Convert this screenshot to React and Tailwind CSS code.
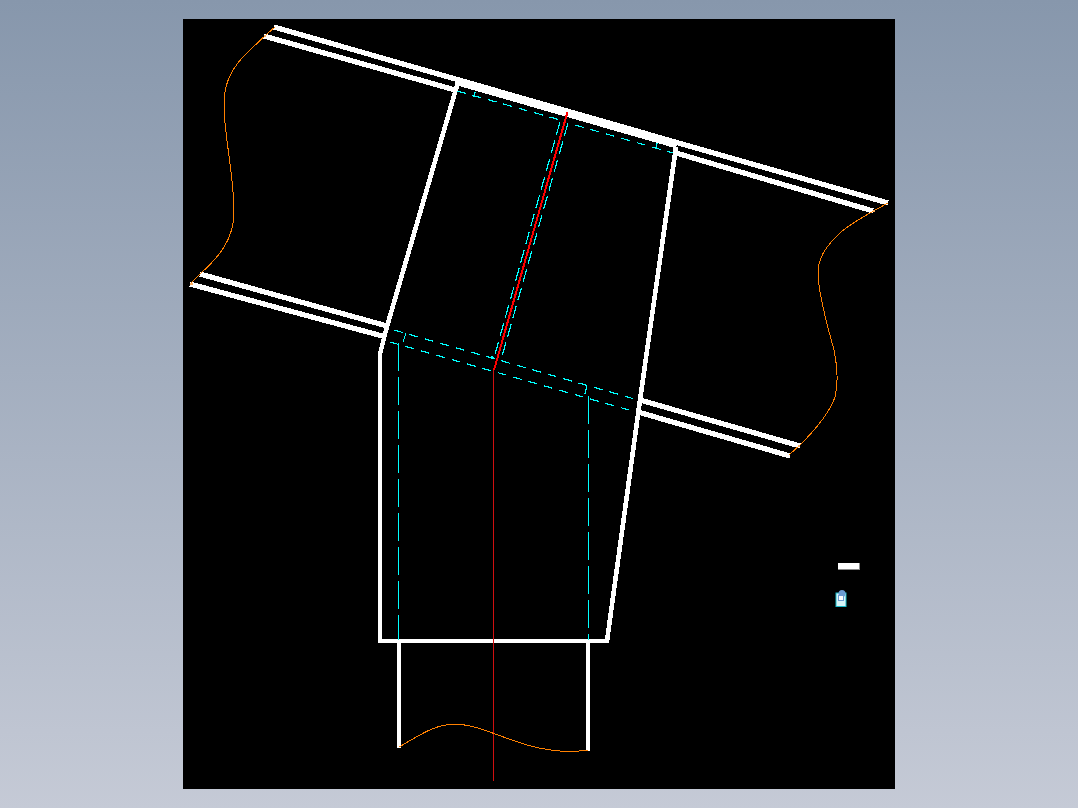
export default function App() {
  const white = "#ffffff";
  const cyan = "#00ffff";
  const orange = "#ff8000";
  return (
    <div className="flex h-[808px] w-full justify-center overflow-hidden bg-gradient-to-b from-[#8797ac] to-[#c5cad6] pt-[19px]">
      <div className="h-[770px] w-[712px] bg-black">
        <svg viewBox="183 19 712 770" width="712" height="770" className="block" fill="none">
          <g stroke={white} strokeWidth="5.2" shapeRendering="crispEdges">
            <path d="M274 27 L888 203" />
            <path d="M264 36 L457 90.5" />
            <path d="M676 153 L873 211" />
            <path d="M200 274 L387 326" />
            <path d="M190 284 L386 337" />
            <path d="M640 400 L800 446" />
            <path d="M638 412 L790 456" />
            <path d="M458 82 L386 330 L380 354 L380 641 L607 641 L640 400 L676 147" strokeLinejoin="round" strokeWidth="4.6" />
            <path d="M458 81.5 L677 144.5" strokeWidth="8" />
            <path d="M399 640 L399 748" strokeWidth="4.4" />
            <path d="M588 640 L588 751" strokeWidth="4.4" />
          </g>
          <g stroke={cyan} strokeWidth="1.2" shapeRendering="crispEdges">
            <path d="M457 91 L564 121 M575 125 L673 153" strokeDasharray="9 7" />
            <path d="M394 330 L638 400" strokeDasharray="9 7" />
            <path d="M390 342 L636 412" strokeDasharray="9 7" />
            <path d="M560 122 L494 358" strokeDasharray="13 6" />
            <path d="M568 123 L501 360" strokeDasharray="13 6" />
            <path d="M475 92 L474 97 M657 143 L656 149 M406 333 L403 342 M587 386 L585 394 M494 358 L491 356 M501 360 L504 362" />
            <path d="M398.5 343 L398.5 640" strokeWidth="1" strokeDasharray="28 6" />
            <path d="M588.5 396 L588.5 640" strokeWidth="1" strokeDasharray="28 6" />
          </g>
          <path d="M567.5 112 L494 370" stroke="#ff0000" strokeWidth="2" shapeRendering="crispEdges" />
          <path d="M493.5 370 L493.5 781" stroke="#d01010" strokeWidth="1" shapeRendering="crispEdges" />
          <g stroke={orange} strokeWidth="1" shapeRendering="crispEdges">
            <path d="M275 27 C262 38 250 50 242 58 C228 74 224 88 224 105 C224 135 234 175 234 212 C234 240 218 258 200 274 L190 284" />
            <path d="M888 203 C870 213 852 222 840 233 C826 246 818 258 818 273 C818 295 830 335 834 350 C838 370 838 385 835 397 C830 412 815 430 800 445 L789 455" />
            <path d="M399 747 C420 735 435 724 456 724 C490 726 520 751 570 751.5 L588 750.5" />
          </g>
          <path d="M264 36 h2 M190 284 h3 M873 211 h2 M798 446 h2" stroke="#ffb060" strokeWidth="2" />
          <rect x="838" y="563" width="22" height="7" fill="#8a8a8a" />
          <rect x="838" y="563" width="21" height="6" fill={white} />
          <rect x="836" y="593" width="10" height="13.5" fill="#d8f4f8" stroke="#18b8c8" strokeWidth="1" />
          <circle cx="842" cy="593.5" r="3.5" fill="#6c9bd2" />
          <rect x="838" y="595" width="6" height="6" fill="#6c9bd2" />
          <rect x="839" y="596" width="4" height="4" fill={white} />
        </svg>
      </div>
    </div>
  );
}
